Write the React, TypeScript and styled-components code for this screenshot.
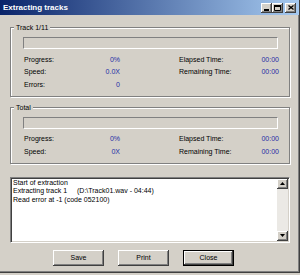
import React from "react";
import styled, { createGlobalStyle } from "styled-components";

const GlobalStyle = createGlobalStyle`
  html, body {
    margin: 0;
    padding: 0;
    background: #d4d0c8;
  }
  body {
    font-family: "Liberation Sans", Arial, sans-serif;
    font-size: 7px;
    color: #000;
  }
`;

const Window = styled.div`
  width: 300px;
  height: 273px;
  box-sizing: border-box;
  background: #d4d0c8;
  border-right: 1px solid #404040;
  border-bottom: 1px solid #404040;
  box-shadow: inset -1px -1px 0 #808080;
  display: flex;
  flex-direction: column;
`;

const TitleBar = styled.div`
  height: 15px;
  display: flex;
  align-items: center;
  padding: 0 3px 0 3px;
  background: linear-gradient(to right, #0a246a, #a6caf0);
`;

const TitleText = styled.div`
  flex: 1;
  color: #fff;
  font-weight: bold;
  font-size: 8px;
  line-height: 10px;
`;

const CaptionButton = styled.div<{ $gap?: number }>`
  width: 11px;
  height: 10px;
  margin-left: ${({ $gap }) => $gap ?? 0}px;
  box-sizing: border-box;
  background: #d4d0c8;
  box-shadow: inset -1px -1px 0 #404040, inset 1px 1px 0 #fff, inset -2px -2px 0 #808080;
  display: flex;
  align-items: center;
  justify-content: center;

  svg {
    display: block;
  }
`;

const Body = styled.div`
  display: flex;
  flex-direction: column;
  padding: 8px 9px 0 10px;
`;

const Group = styled.fieldset<{ $top?: number }>`
  margin: ${({ $top }) => $top ?? 0}px 0 0 0;
  padding: 5px 11px 5px 12px;
  min-width: 0;
  border: 1px solid #808080;
  box-shadow: inset 1px 1px 0 #fff, 1px 1px 0 #fff;
`;

const Legend = styled.legend`
  padding: 0 2px;
  margin-left: -9px;
  line-height: 9px;
  font-size: 7px;
  background: #d4d0c8;
`;

const Bar = styled.div`
  height: 12px;
  box-sizing: border-box;
  border-top: 1px solid #808080;
  border-left: 1px solid #808080;
  border-bottom: 1px solid #fff;
  border-right: 1px solid #fff;
  background: #d4d0c8;
`;

const Stats = styled.div`
  display: grid;
  grid-template-columns: 97px 101px;
  column-gap: 58px;
  grid-auto-rows: 12.5px;
  margin-top: 4px;
`;

const Stat = styled.div`
  display: flex;
  align-items: center;
  justify-content: space-between;
  padding-left: 1px;
  line-height: 9px;
`;

const Value = styled.span`
  color: #1f2ca6;
`;

const LogBox = styled.div`
  margin-top: 13px;
  height: 66px;
  box-sizing: border-box;
  border-top: 1px solid #808080;
  border-left: 1px solid #808080;
  border-bottom: 1px solid #fff;
  border-right: 1px solid #fff;
  box-shadow: inset 1px 1px 0 #404040, inset -1px -1px 0 #d4d0c8;
  background: #fff;
  display: flex;
  padding: 1px;
`;

const LogText = styled.div`
  flex: 1;
  padding: 0 0 0 1px;
  line-height: 8.5px;
  white-space: pre;
`;

const Col = styled.span<{ $w: number }>`
  display: inline-block;
  width: ${({ $w }) => $w}px;
`;

const Scrollbar = styled.div`
  width: 11px;
  display: flex;
  flex-direction: column;
  justify-content: space-between;
  background: #ebe9e5;
`;

const ScrollButton = styled.div`
  height: 10px;
  box-sizing: border-box;
  background: #d4d0c8;
  box-shadow: inset -1px -1px 0 #404040, inset 1px 1px 0 #fff, inset -2px -2px 0 #808080;
  display: flex;
  align-items: center;
  justify-content: center;

  svg {
    display: block;
  }
`;

const Buttons = styled.div`
  display: flex;
  gap: 14px;
  margin-top: 7px;
  padding-left: 43px;
`;

const Button = styled.div<{ $default?: boolean }>`
  width: 51px;
  height: 16px;
  flex: none;
  box-sizing: border-box;
  display: flex;
  align-items: center;
  justify-content: center;
  line-height: 9px;
  background: #d4d0c8;
  border: ${({ $default }) => ($default ? "1px solid #000" : "none")};
  box-shadow: inset -1px -1px 0 #404040, inset 1px 1px 0 #fff, inset -2px -2px 0 #808080;
`;

const Minimize = () => (
  <svg width="6" height="6" viewBox="0 0 6 6">
    <rect x="0" y="4" width="5" height="2" fill="#000" />
  </svg>
);

const Maximize = () => (
  <svg width="7" height="6" viewBox="0 0 7 6">
    <path d="M0.5 1.5 H6.5 V5.5 H0.5 Z" fill="none" stroke="#000" />
    <rect x="0" y="0" width="7" height="2" fill="#000" />
  </svg>
);

const CloseGlyph = () => (
  <svg width="6" height="5" viewBox="0 0 6 5">
    <path d="M0.5 0.5 L5.5 4.5 M5.5 0.5 L0.5 4.5" stroke="#000" strokeWidth="1.3" />
  </svg>
);

const Arrow = ({ down }: { down?: boolean }) => (
  <svg width="5" height="3" viewBox="0 0 5 3">
    <path d={down ? "M0 0 H5 L2.5 3 Z" : "M0 3 H5 L2.5 0 Z"} fill="#000" />
  </svg>
);

type Row = { label: string; value: string };

const StatBlock = ({ rows }: { rows: [Row, Row?][] }) => (
  <Stats>
    {rows.map(([a, b], i) => (
      <React.Fragment key={i}>
        <Stat>
          <span>{a.label}</span>
          <Value>{a.value}</Value>
        </Stat>
        {b ? (
          <Stat>
            <span>{b.label}</span>
            <Value>{b.value}</Value>
          </Stat>
        ) : (
          <div />
        )}
      </React.Fragment>
    ))}
  </Stats>
);

export default function App() {
  return (
    <>
      <GlobalStyle />
      <Window>
        <TitleBar>
          <TitleText>Extracting tracks</TitleText>
          <CaptionButton>
            <Minimize />
          </CaptionButton>
          <CaptionButton>
            <Maximize />
          </CaptionButton>
          <CaptionButton $gap={2}>
            <CloseGlyph />
          </CaptionButton>
        </TitleBar>
        <Body>
          <Group>
            <Legend>Track 1/11</Legend>
            <Bar />
            <StatBlock
              rows={[
                [
                  { label: "Progress:", value: "0%" },
                  { label: "Elapsed Time:", value: "00:00" },
                ],
                [
                  { label: "Speed:", value: "0.0X" },
                  { label: "Remaining Time:", value: "00:00" },
                ],
                [{ label: "Errors:", value: "0" }],
              ]}
            />
          </Group>
          <Group $top={6}>
            <Legend>Total</Legend>
            <Bar />
            <StatBlock
              rows={[
                [
                  { label: "Progress:", value: "0%" },
                  { label: "Elapsed Time:", value: "00:00" },
                ],
                [
                  { label: "Speed:", value: "0X" },
                  { label: "Remaining Time:", value: "00:00" },
                ],
              ]}
            />
          </Group>
          <LogBox>
            <LogText>
              {"Start of extraction\n"}
              <Col $w={64}>Extracting track 1</Col>
              {"(D:\\Track01.wav - 04:44)\n"}
              {"Read error at -1 (code 052100)"}
            </LogText>
            <Scrollbar>
              <ScrollButton>
                <Arrow />
              </ScrollButton>
              <ScrollButton>
                <Arrow down />
              </ScrollButton>
            </Scrollbar>
          </LogBox>
          <Buttons>
            <Button>Save</Button>
            <Button>Print</Button>
            <Button $default>Close</Button>
          </Buttons>
        </Body>
      </Window>
    </>
  );
}
